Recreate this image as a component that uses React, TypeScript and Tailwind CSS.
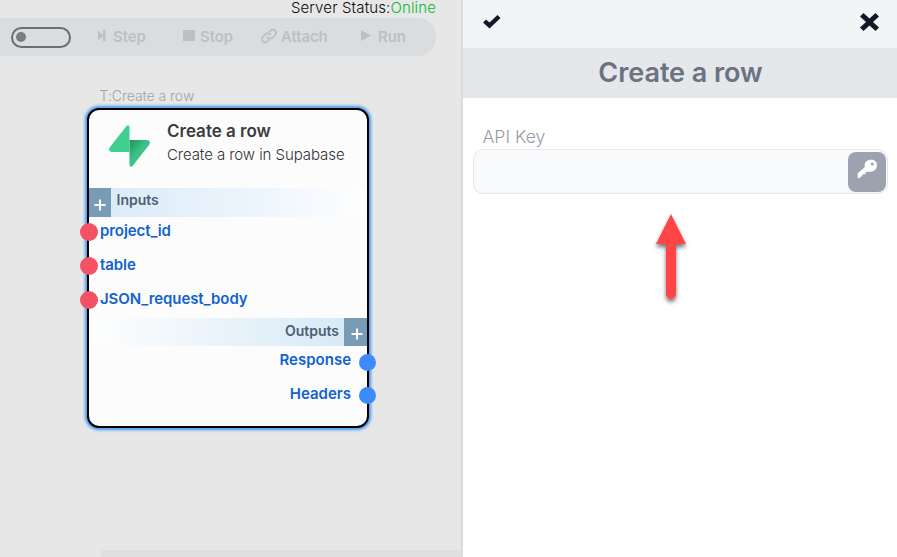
import type { ReactNode } from "react";

function ToolButton({ icon, label, className }: { icon: ReactNode; label: string; className: string }) {
  return (
    <div className={`flex h-full shrink-0 items-center ${className}`}>
      {icon}
      <span className="whitespace-nowrap">{label}</span>
    </div>
  );
}

function Toolbar() {
  return (
    <div className="flex h-[38px] w-[436px] items-center rounded-r-[18px] bg-[#d9dde0] pl-[11px] text-[15px] font-semibold tracking-[-0.1px] text-[#bfbfbf]">
      <div className="flex h-[21px] w-[60px] shrink-0 items-center rounded-full border-2 border-[#6d6d6d] pl-[3px]">
        <div className="h-2.5 w-2.5 rounded-full bg-[#7c7c7c]" />
      </div>
      <ToolButton
        label="Step"
        className="ml-[27px] w-[84px] gap-[7px]"
        icon={
          <svg width="8" height="11" viewBox="0 0 8 11" fill="currentColor" className="mb-[3px]">
            <path d="M0 .5 5.500 5.500 0 10.500zM5 0h2.500v11H5z" />
          </svg>
        }
      />
      <ToolButton label="Stop" className="w-[79px] gap-[5px]" icon={<div className="ml-px mb-[3px] h-[11px] w-3 bg-[#bfbfbf]" />} />
      <ToolButton
        label="Attach"
        className="w-[100px] gap-1"
        icon={
          <svg width="16" height="16" viewBox="0 0 24 24" fill="none" stroke="currentColor" strokeWidth="2.7" strokeLinecap="round" className="mb-[3px]">
            <path d="M10 14a5 5 0 0 0 7.5.5l4-4a5 5 0 0 0-7-7l-2.2 2.2" />
            <path d="M14 10a5 5 0 0 0-7.5-.5l-4 4a5 5 0 0 0 7 7l2.2-2.2" />
          </svg>
        }
      />
      <ToolButton
        label="Run"
        className="gap-[7px]"
        icon={
          <svg width="10" height="11" viewBox="0 0 10 11" fill="currentColor" className="mb-[3px]">
            <path d="M0 0 10 5.5 0 11z" />
          </svg>
        }
      />
    </div>
  );
}

function SupabaseLogo() {
  return (
    <svg width="41" height="42" viewBox="0 0 41 42" className="mt-px shrink-0">
      <defs>
        <linearGradient id="fold" x1="20" y1="14" x2="32" y2="24" gradientUnits="userSpaceOnUse">
          <stop stopColor="#248a5b" />
          <stop offset="1" stopColor="#3bc386" />
        </linearGradient>
      </defs>
      <path d="M20.500 15H38.500Q42.500 16 40 20L23.500 41Q21 43 20.500 40Z" fill="url(#fold)" />
      <path d="M20.500 27H2.500Q-1.500 26 1 22L17.500 1Q20 -1 20.500 2Z" fill="#3fcf8e" />
    </svg>
  );
}

function AddButton({ className }: { className: string }) {
  return (
    <div className={`flex h-full shrink-0 items-center bg-[#789bb6] pt-1 ${className}`}>
      <svg width="12" height="12" viewBox="0 0 12 12" fill="none" stroke="#fafafa" strokeWidth="2">
        <path d="M6 .5v11M.5 6h11" />
      </svg>
    </div>
  );
}

function InputPort({ name }: { name: string }) {
  return (
    <div className="ml-[-9px] flex h-[34px] items-center gap-[2px]">
      <i className="h-[18px] w-[18px] rounded-full bg-[#f65064]" />
      <span className="mb-0.5 tracking-[-0.08px] text-[#1062d0]">{name}</span>
    </div>
  );
}

function OutputPort({ name, className }: { name: string; className: string }) {
  return (
    <div className="mr-[-9px] flex h-[34px] items-center justify-end gap-2">
      <span className={`text-[#1062d0] ${className}`}>{name}</span>
      <i className="h-[17px] w-[17px] rounded-full bg-[#3c8afb]" />
    </div>
  );
}

function NodeCard() {
  return (
    <div className="absolute left-[87px] top-[108px] flex h-[320px] w-[282px] flex-col rounded-[12px] border-2 border-black bg-[#fcfcfc] text-[15px] font-semibold shadow-[0_0_3px_2px_#4298ec]">
      <div className="flex h-[78px] shrink-0 gap-[17px] pl-5 pt-[14px]">
        <SupabaseLogo />
        <div className="whitespace-nowrap text-[#3c3c3c]">
          <h2 className="-mt-[5px] text-[17px] leading-6">Create a row</h2>
          <p className="text-[15px] font-light leading-6 tracking-[-0.07px] text-[#333333]">Create a row in Supabase</p>
        </div>
      </div>
      <div className="flex h-[29px] shrink-0 bg-gradient-to-r from-[#d9eaf7] via-[#edf5fd] via-60% to-[#fefefe]">
        <AddButton className="w-[22px] pl-[4.5px]" />
        <span className="ml-[5.5px] text-[14px] leading-[23px] text-[#4e5f75]">Inputs</span>
      </div>
      <div className="-mt-[2px] h-[103px] shrink-0">
        <InputPort name="project_id" />
        <InputPort name="table" />
        <InputPort name="JSON_request_body" />
      </div>
      <div className="flex h-7 shrink-0 justify-end bg-gradient-to-l from-[#d5e8f5] via-[#edf5fb] via-60% to-[#fefefe]">
        <span className="mr-[5px] text-[14px] leading-[25px] text-[#4e5f75]">Outputs</span>
        <AddButton className="w-[23px] pl-[6.5px]" />
      </div>
      <div className="-mt-px">
        <OutputPort name="Response" className="mb-1" />
        <div className="-mt-px">
          <OutputPort name="Headers" className="mb-px" />
        </div>
      </div>
    </div>
  );
}

export default function App() {
  return (
    <div className="flex h-[557px] w-[897px] overflow-hidden bg-white font-['Inter',sans-serif]">
      <main className="relative flex w-[463px] shrink-0 flex-col overflow-hidden border-r-2 border-[#d8dce1] bg-[#e7e7e7]">
        <div className="h-[18px] w-[436px] text-right text-[15px] font-light leading-[16px] tracking-[0.13px] text-[#0a0a0a]">
          Server Status:<span className="text-[#08b833]">Online</span>
        </div>
        <Toolbar />
        <div className="ml-[99.5px] mt-[31px] text-[14px] font-light leading-[18px] tracking-[-0.04px] text-[#a3a3a3]">T:Create a row</div>
        <NodeCard />
        <div className="ml-[101px] mt-auto h-[7px] bg-[#e0e0e0]" />
      </main>
      <aside className="flex min-w-0 flex-1 flex-col">
        <div className="flex h-12 shrink-0 items-center justify-between bg-[#f3f4f6] pb-1 pl-5 pr-[18px] text-[#111827]">
          <svg width="18" height="14" viewBox="0 0 18 14" fill="currentColor">
            <path d="M0 7.500 3 4.500 6.500 7.500 14.500 0 17.500 3 6.500 13.500Z" />
          </svg>
          <svg width="19" height="18" viewBox="0 0 19 18" fill="currentColor">
            <path d="M3.500 0 9.500 5.600 15.500 0 19 3.400 13 9 19 14.600 15.500 18 9.500 12.400 3.500 18 0 14.600 6 9 0 3.400Z" />
          </svg>
        </div>
        <h1 className="h-[50px] shrink-0 bg-[#e5e7eb] pl-px text-center text-[27px] font-semibold leading-[49px] tracking-[-0.05px] text-[#6b7280]">Create a row</h1>
        <div className="flex flex-col px-[10px] pt-[26px]">
          <label className="pl-[9.5px] text-[17.6px] font-light leading-[25px] text-[#949ba8]">API Key</label>
          <div className="flex h-[45px] w-[415px] justify-end rounded-[10px] border border-[#e5e7eb] bg-[#f9fafb] p-[2px] pr-px">
            <button className="flex h-10 w-[38px] justify-center rounded-lg bg-[#9ca3af] pt-[7px] text-white">
              <svg width="20" height="20" viewBox="0 0 20 20" fill="currentColor">
                <path
                  fillRule="evenodd"
                  d="M14 .8C17.600.8 20 3 20 6.300 20 10 17 12.700 13.500 12.700H9.800L8.500 13.500V15.300H6L5.200 16.200V17.500H3.700L2 19.500.7 19V14.300L7.700 8.300V6.300C7.700 3 10.500.8 14 .8ZM15.300 3.500A1.500 1.500 0 1 0 15.300 6.500 1.500 1.500 0 1 0 15.300 3.500Z"
                />
              </svg>
            </button>
          </div>
          <svg width="50" height="108" viewBox="0 0 50 108" className="ml-[173px] mt-3">
            <defs>
              <filter id="arrow-shadow" x="-30%" y="-20%" width="160%" height="140%">
                <feDropShadow dx="0" dy="3" stdDeviation="2" floodColor="#000" floodOpacity="0.55" />
              </filter>
            </defs>
            <path d="M25 8 40 38H30V88A5 5 0 0 1 20 88V38H10Z" fill="#ff4444" filter="url(#arrow-shadow)" />
          </svg>
        </div>
      </aside>
    </div>
  );
}
